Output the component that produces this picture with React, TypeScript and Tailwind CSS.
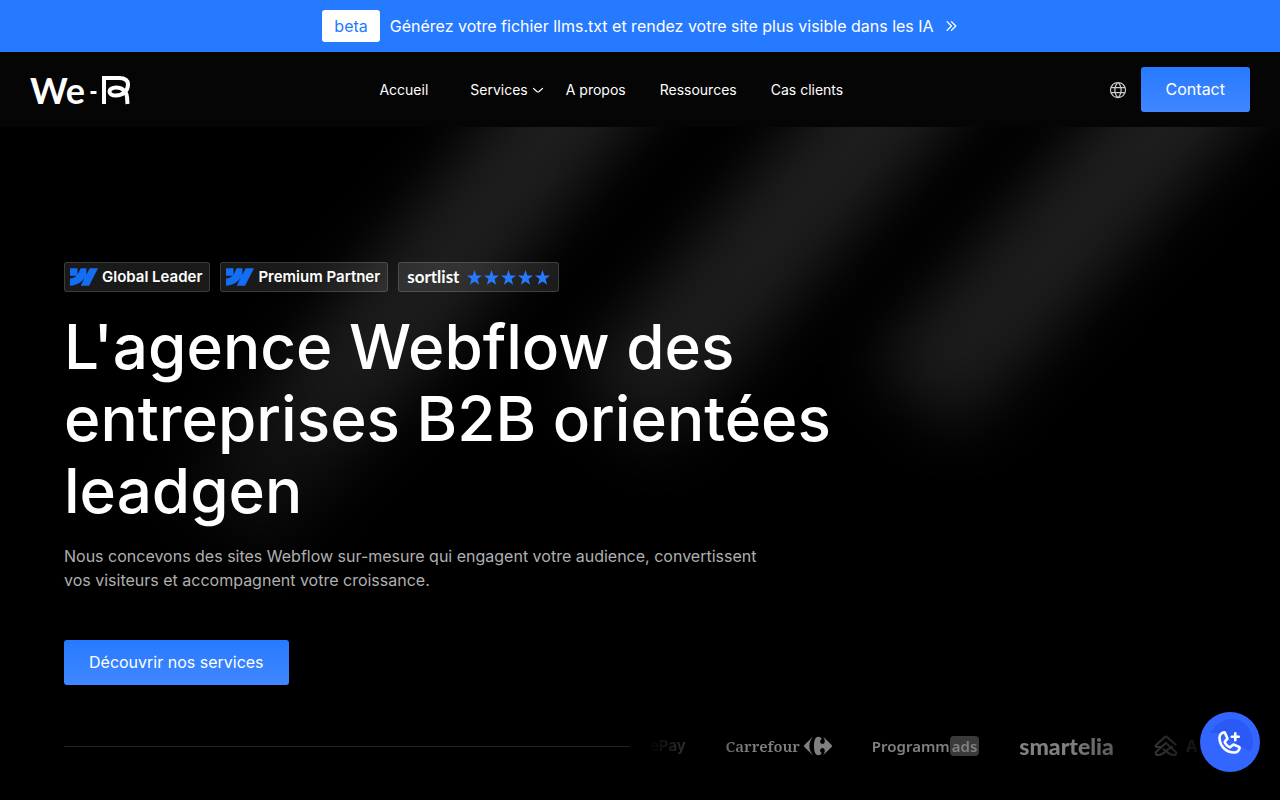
import React from 'react';
import { PiCaretDoubleRightBold, PiGlobe, PiPhonePlusBold } from 'react-icons/pi';
import { SiCarrefour, SiWebflow } from 'react-icons/si';

interface BadgeProps {
  label: string;
}

const Logo: React.FC = () => (
  <a href="#" aria-label="We-R" className="flex w-[101px] shrink-0 items-center justify-between">
    <span className="font-['Lato',sans-serif] text-[36px] leading-[44px] font-bold">We</span>
    <svg width="41" height="30" viewBox="60 0 41 30" fill="none" stroke="#fff" strokeWidth="4">
      <path d="M60.500 17.500h6" strokeWidth="3" />
      <path d="M74 29V3H89C95 3 98 5.500 98 9.500c0 6-5 11-12 11-4.500 0-6.500-2-6.500-4s2.500-4 6.500-4c6.500 0 10.500 4 11 9.500l.5 7" />
    </svg>
  </a>
);

const Star: React.FC = () => (
  <svg width="15" height="15" viewBox="0 0 24 24" fill="#267aff">
    <path d="M12 0l3 8.700 9 .200-7.200 5.500L19.400 23.500 12 18.200 4.600 23.500l2.600-9.100L0 8.900l9-.200z" />
  </svg>
);

const WebflowBadge: React.FC<BadgeProps> = ({ label }) => (
  <li className="flex h-[30px] items-center gap-1 rounded-[3px] border border-white/15 bg-white/10 pr-[7px] pl-[5px]">
    <SiWebflow className="size-7 text-[#146ef5]" />
    <span className="text-[15px] font-semibold">{label}</span>
  </li>
);

// Diagonal light beams behind the hero
const Beams: React.FC = () => (
  <svg
    className="pointer-events-none absolute inset-0 h-full w-full"
    viewBox="0 0 1280 673"
    preserveAspectRatio="xMidYMin slice"
    fill="none"
    aria-hidden="true"
  >
    <defs>
      <filter
        id="beam-blur"
        x="0"
        y="-300"
        width="1400"
        height="973"
        filterUnits="userSpaceOnUse"
        colorInterpolationFilters="sRGB"
      >
        <feGaussianBlur stdDeviation="30" />
      </filter>
      <linearGradient id="beam-fade" x1="0" y1="0" x2="0" y2="380" gradientUnits="userSpaceOnUse">
        <stop offset="0" stopColor="#1e1e1e" />
        <stop offset="0.6" stopColor="#1c1c1c" />
        <stop offset="1" stopColor="#0a0a0a" />
      </linearGradient>
    </defs>
    <g filter="url(#beam-blur)" stroke="url(#beam-fade)" strokeWidth="115">
      <path d="M665-130L225 400" />
      <path d="M985-130L615 290" />
      <path d="M1280-130L915 275" />
    </g>
  </svg>
);

const LogoStrip: React.FC = () => (
  <div className="flex min-w-0 flex-1 items-center gap-10 overflow-hidden pl-5 text-[#808080] [mask-image:linear-gradient(to_right,transparent_3%,black_20%,black_75%,transparent)] *:shrink-0">
    <span className="text-[15px] font-semibold">ePay</span>
    <span className="flex items-center gap-1 font-['Noto_Serif','Liberation_Serif',serif] text-[15px] font-semibold">
      Carrefour
      <SiCarrefour className="size-7" />
    </span>
    <span className="flex items-center font-['Noto_Sans',sans-serif] text-[15px] font-semibold">
      Programm
      <span className="rounded-sm bg-[#3a3a3a] px-[2px] leading-5">ads</span>
    </span>
    <span className="font-['Lato',sans-serif] text-[23px] leading-7 font-black">smartelia</span>
    <span className="flex items-center gap-2 text-[16px] font-bold">
      <svg width="24" height="22" viewBox="0 0 24 22" fill="none" stroke="currentColor" strokeWidth="2">
        <path d="M22 10L13 2q-1-1-2 0L2 10q-1 2 1 2h4l5-4 10 9q1 3-2 3-4 0-8-4l-3-2M12 8L2 17q-1 3 2 3 4 0 8-4l5-4h2" />
      </svg>
      A
    </span>
  </div>
);

const App: React.FC = () => {
  return (
    <div className="flex min-h-screen flex-col bg-black font-['Inter',sans-serif] text-white">
      <div className="flex min-h-[52px] items-center justify-center gap-[10px] bg-[#267aff] px-4">
        <span className="rounded-[3px] bg-white px-3 py-1 text-base text-[#267aff]">beta</span>
        <a href="#" className="flex items-center gap-[10px] text-base">
          Générez votre fichier llms.txt et rendez votre site plus visible dans les IA
          <PiCaretDoubleRightBold size={14} />
        </a>
      </div>

      <header className="flex min-h-[75px] items-center justify-between bg-[#050505] px-[30px]">
        <Logo />
        <nav className="mr-4 flex items-center gap-[34px] text-sm">
          <a href="#">Accueil</a>
          <button type="button" className="-mr-3 ml-2 flex items-center gap-1">
            Services
            <svg width="12" height="12" viewBox="0 0 12 12" fill="none" stroke="currentColor" strokeWidth="1.200">
              <path d="M1.500 4.500L5.200 7.700q.8.600 1.600 0L10.500 4.500" strokeLinecap="round" />
            </svg>
          </button>
          <a href="#">A propos</a>
          <a href="#">Ressources</a>
          <a href="#">Cas clients</a>
        </nav>
        <div className="flex items-center gap-[13px]">
          <button type="button" aria-label="Langue">
            <PiGlobe size={20} className="text-[#cccccc]" />
          </button>
          <a href="#" className="rounded-[3px] bg-linear-to-b from-[#267aff] to-[#4087ff] px-[25px] py-[10px] text-base leading-[25px]">
            Contact
          </a>
        </div>
      </header>

      <main className="relative flex flex-1 flex-col overflow-hidden">
        <Beams />
        <section className="relative px-16 pt-[135px]">
          <ul className="flex items-center gap-[10px]">
            <WebflowBadge label="Global Leader" />
            <WebflowBadge label="Premium Partner" />
            <li className="flex h-[30px] items-center gap-2 rounded-[3px] border border-white/15 bg-white/10 px-2">
              <span className="font-['Lato',sans-serif] text-[17px] font-bold">sortlist</span>
              <span className="flex gap-[2px]">
                <Star />
                <Star />
                <Star />
                <Star />
                <Star />
              </span>
            </li>
          </ul>
          <h1 className="mt-[19px] max-w-[800px] text-[62px] leading-[72px] font-medium">
            L'agence Webflow des entreprises B2B orientées leadgen
          </h1>
          <p className="mt-[17px] max-w-[720px] text-base leading-6 text-[#b0b0b0]">
            Nous concevons des sites Webflow sur-mesure qui engagent votre audience, convertissent vos visiteurs et
            accompagnent votre croissance.
          </p>
          <a href="#" className="mt-12 inline-block rounded-[3px] bg-linear-to-b from-[#267aff] to-[#4087ff] px-[25px] py-[10px] text-base leading-[25px]">
            Découvrir nos services
          </a>
        </section>

        <section className="relative mt-[47px] flex items-center px-16 pb-9">
          <div className="h-px flex-1 bg-[#222222]" />
          <LogoStrip />
        </section>
      </main>

      <button
        type="button"
        aria-label="Nous appeler"
        className="fixed right-5 bottom-7 grid size-[60px] place-items-center rounded-full bg-[#3366ff] *:[grid-area:1/1]"
      >
        <svg width="60" height="60" viewBox="0 0 60 60" fill="#2a59f5" aria-hidden="true">
          <path d="M11 21C19 1 51 1 53 30q0 6-3 10L34 30 24 21z" />
        </svg>
        <PiPhonePlusBold size={28} />
      </button>
    </div>
  );
};

export default App;
